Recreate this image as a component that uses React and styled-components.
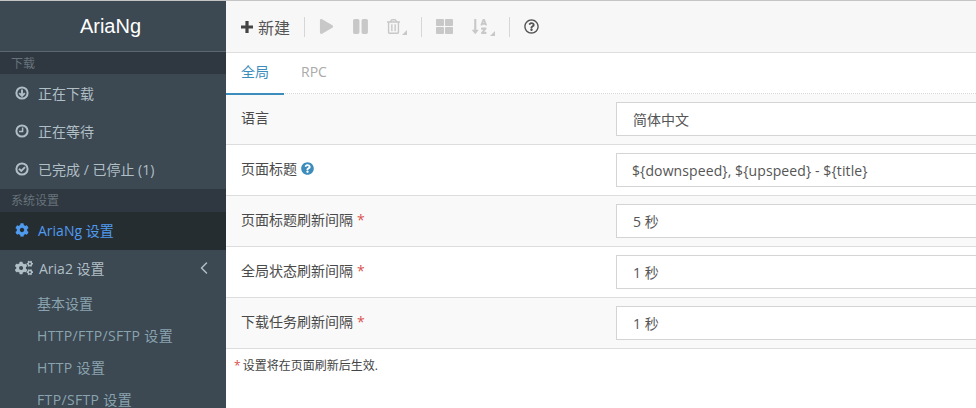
import React from "react";
import styled, { createGlobalStyle } from "styled-components";
import { ChevronLeft } from "lucide-react";
import {
  FaCog,
  FaCogs,
  FaPlay,
  FaPause,
  FaRegTrashAlt,
  FaThLarge,
  FaSortAlphaDown,
  FaRegQuestionCircle,
  FaQuestionCircle,
} from "react-icons/fa";

const GlobalStyle = createGlobalStyle`
  html, body {
    margin: 0;
    padding: 0;
    overflow: hidden;
    background: #fff;
  }
  * { box-sizing: border-box; }
`;

const FONT = `"Open Sans", "Noto Sans CJK SC", sans-serif`;

const Page = styled.div`
  width: 976px;
  height: 408px;
  display: flex;
  overflow: hidden;
  font-family: ${FONT};
  font-size: 14px;
  border-top: 1px solid #c4c4c4;
`;

const Sidebar = styled.aside`
  width: 226px;
  flex: none;
  background: #3c4852;
  display: flex;
  flex-direction: column;
`;

const Logo = styled.div`
  height: 51px;
  flex: none;
  display: flex;
  align-items: center;
  justify-content: center;
  padding-right: 5px;
  color: #fff;
  font-family: "Liberation Sans", sans-serif;
  font-size: 20px;
  border-bottom: 1px solid #5d6770;
`;

const SectionHeader = styled.div`
  height: ${(p) => p.$h || 22}px;
  flex: none;
  padding-left: 11px;
  background: #2f3840;
  color: #67737c;
  font-size: 12px;
  line-height: 24px;
`;

const NavList = styled.div`
  flex: none;
  padding-bottom: 1px;
`;

const NavItem = styled.div`
  height: 38px;
  flex: none;
  display: flex;
  align-items: center;
  padding: 0 15px ${(p) => (p.$lift ? 2 : 0)}px;
  color: ${(p) => (p.$active ? "#4f9bef" : "#b0bfc6")};
  background: ${(p) => (p.$active ? "#262d31" : "transparent")};
  svg {
    font-size: ${(p) => p.$icon || 14}px;
    flex: none;
  }
`;

const NavLabel = styled.span`
  margin-left: ${(p) => p.$gap || 9}px;
  flex: 1;
`;

const NavArrow = styled.span`
  display: flex;
  margin-right: -3px;
`;

const SubItem = styled.div`
  height: 32px;
  flex: none;
  padding-left: 37px;
  line-height: 32px;
  color: #8aa4af;
  letter-spacing: ${(p) => (p.$wide ? "0.35px" : "0")};
`;

const Main = styled.main`
  flex: 1;
  min-width: 0;
  display: flex;
  flex-direction: column;
`;

const Toolbar = styled.div`
  height: 52px;
  flex: none;
  display: flex;
  align-items: center;
  padding-left: 15px;
  background: #f7f7f7;
  border-bottom: 1px solid #dedede;
`;

const NewButton = styled.div`
  display: flex;
  align-items: center;
  gap: 5px;
  color: #555;
  font-size: 16px;
  width: 49px;
  white-space: nowrap;
  svg { flex: none; }
`;

const Separator = styled.div`
  width: 1px;
  height: 20px;
  background: #d6d6d6;
  margin: 0 14px;
`;

const ToolIcon = styled.div`
  position: relative;
  width: ${(p) => p.$w}px;
  display: flex;
  align-items: center;
  color: ${(p) => (p.$dark ? "#555" : "#c8c8c8")};
  font-size: ${(p) => p.$size || 15}px;
`;

const Caret = styled.span`
  position: absolute;
  right: 0;
  bottom: -1px;
  width: 0;
  height: 0;
  border-left: 5px solid transparent;
  border-bottom: 5px solid #c8c8c8;
`;

const Tabs = styled.div`
  height: 41px;
  flex: none;
  display: flex;
  border-bottom: 1px dotted #d8d8d8;
`;

const Tab = styled.div`
  position: relative;
  width: ${(p) => p.$w}px;
  height: 42px;
  flex: none;
  padding-left: ${(p) => (p.$active ? 15 : 17)}px;
  line-height: 38px;
  color: ${(p) => (p.$active ? "#3c8dbc" : "#aaa")};
  border-bottom: ${(p) => (p.$active ? "2px solid #3c8dbc" : "none")};
`;

const Row = styled.div`
  height: 51px;
  flex: none;
  display: flex;
  align-items: center;
  padding-left: 15px;
  background: ${(p) => (p.$odd ? "#f9f9f9" : "#fff")};
  border-bottom: 1px solid #dddddd;
`;

const Label = styled.div`
  width: 375px;
  flex: none;
  display: flex;
  align-items: center;
  gap: 4px;
  color: #4a4a4a;
  font-size: 14px;
  margin-top: -4px;
`;

const Star = styled.span`
  color: #d9534f;
`;

const HelpIcon = styled(FaQuestionCircle)`
  color: #3c8dbc;
  font-size: 13px;
`;

const Field = styled.div`
  width: 400px;
  height: 34px;
  flex: none;
  padding-left: ${(p) => (p.$latin ? 15 : 16)}px;
  line-height: 34px;
  background: #fff;
  border: 1px solid #d4d4d4;
  color: #555;
  font-size: 14px;
  letter-spacing: ${(p) => (p.$latin ? "0.1px" : "0")};
  white-space: nowrap;
`;

const Note = styled.div`
  padding: 7px 0 0 8px;
  font-size: 12px;
  color: #444;
  word-spacing: -1px;
`;

const RingIcon = ({ children }) => (
  <svg width="14" height="14" viewBox="0 0 14 14" fill="none" stroke="currentColor">
    <circle cx="7" cy="7" r="5.6" strokeWidth="2" />
    {children}
  </svg>
);

const PlusIcon = () => (
  <svg width="12" height="12" viewBox="0 0 12 12" fill="#444">
    <path d="M4.4 0h3.2v4.4H12v3.2H7.6V12H4.4V7.6H0V4.4h4.4z" />
  </svg>
);

const nav = [
  {
    icon: (
      <RingIcon>
        <path d="M7 3.6v6.6M4.2 7.2 7 10l2.8-2.8" strokeWidth="1.9" />
      </RingIcon>
    ),
    label: "正在下载",
  },
  {
    icon: (
      <RingIcon>
        <path d="M7.6 3.4v4.2H4" strokeWidth="1.5" />
      </RingIcon>
    ),
    label: "正在等待",
  },
  {
    icon: (
      <RingIcon>
        <path d="M4 6.8 6.3 9 10 5.2" strokeWidth="1.9" />
      </RingIcon>
    ),
    label: "已完成 / 已停止 (1)",
  },
];

const subs = [
  { label: "基本设置" },
  { label: "HTTP/FTP/SFTP 设置", wide: true },
  { label: "HTTP 设置", wide: true },
  { label: "FTP/SFTP 设置", wide: true },
];

const rows = [
  { label: "语言", value: "简体中文" },
  { label: "页面标题", value: "${downspeed}, ${upspeed} - ${title}", help: true, latin: true },
  { label: "页面标题刷新间隔", value: "5 秒", star: true },
  { label: "全局状态刷新间隔", value: "1 秒", star: true },
  { label: "下载任务刷新间隔", value: "1 秒", star: true },
];

export default function App() {
  return (
    <Page>
      <GlobalStyle />
      <Sidebar>
        <Logo>AriaNg</Logo>
        <SectionHeader>下载</SectionHeader>
        <NavList>
          {nav.map((item) => (
            <NavItem key={item.label}>
              {item.icon}
              <NavLabel>{item.label}</NavLabel>
            </NavItem>
          ))}
        </NavList>
        <SectionHeader $h={23}>系统设置</SectionHeader>
        <NavItem $active $lift>
          <FaCog />
          <NavLabel>AriaNg 设置</NavLabel>
        </NavItem>
        <NavItem $icon={18} $lift>
          <FaCogs />
          <NavLabel $gap={6}>Aria2 设置</NavLabel>
          <NavArrow>
            <ChevronLeft size={20} strokeWidth={1.8} />
          </NavArrow>
        </NavItem>
        {subs.map((s) => (
          <SubItem key={s.label} $wide={s.wide}>{s.label}</SubItem>
        ))}
      </Sidebar>
      <Main>
        <Toolbar>
          <NewButton>
            <PlusIcon />
            新建
          </NewButton>
          <Separator />
          <ToolIcon $w={33}>
            <FaPlay />
          </ToolIcon>
          <ToolIcon $w={34} $size={17}>
            <FaPause />
          </ToolIcon>
          <ToolIcon $w={21}>
            <FaRegTrashAlt />
            <Caret />
          </ToolIcon>
          <Separator />
          <ToolIcon $w={35} $size={17}>
            <FaThLarge />
          </ToolIcon>
          <ToolIcon $w={24} $size={17}>
            <FaSortAlphaDown />
            <Caret />
          </ToolIcon>
          <Separator />
          <ToolIcon $w={16} $dark>
            <FaRegQuestionCircle />
          </ToolIcon>
        </Toolbar>
        <Tabs>
          <Tab $active $w={58}>全局</Tab>
          <Tab $w={60}>RPC</Tab>
        </Tabs>
        {rows.map((r, i) => (
          <Row key={r.label} $odd={i % 2 === 0}>
            <Label>
              {r.label}
              {r.help && <HelpIcon />}
              {r.star && <Star>*</Star>}
            </Label>
            <Field $latin={r.latin}>{r.value}</Field>
          </Row>
        ))}
        <Note>
          <Star>*</Star> 设置将在页面刷新后生效.
        </Note>
      </Main>
    </Page>
  );
}
